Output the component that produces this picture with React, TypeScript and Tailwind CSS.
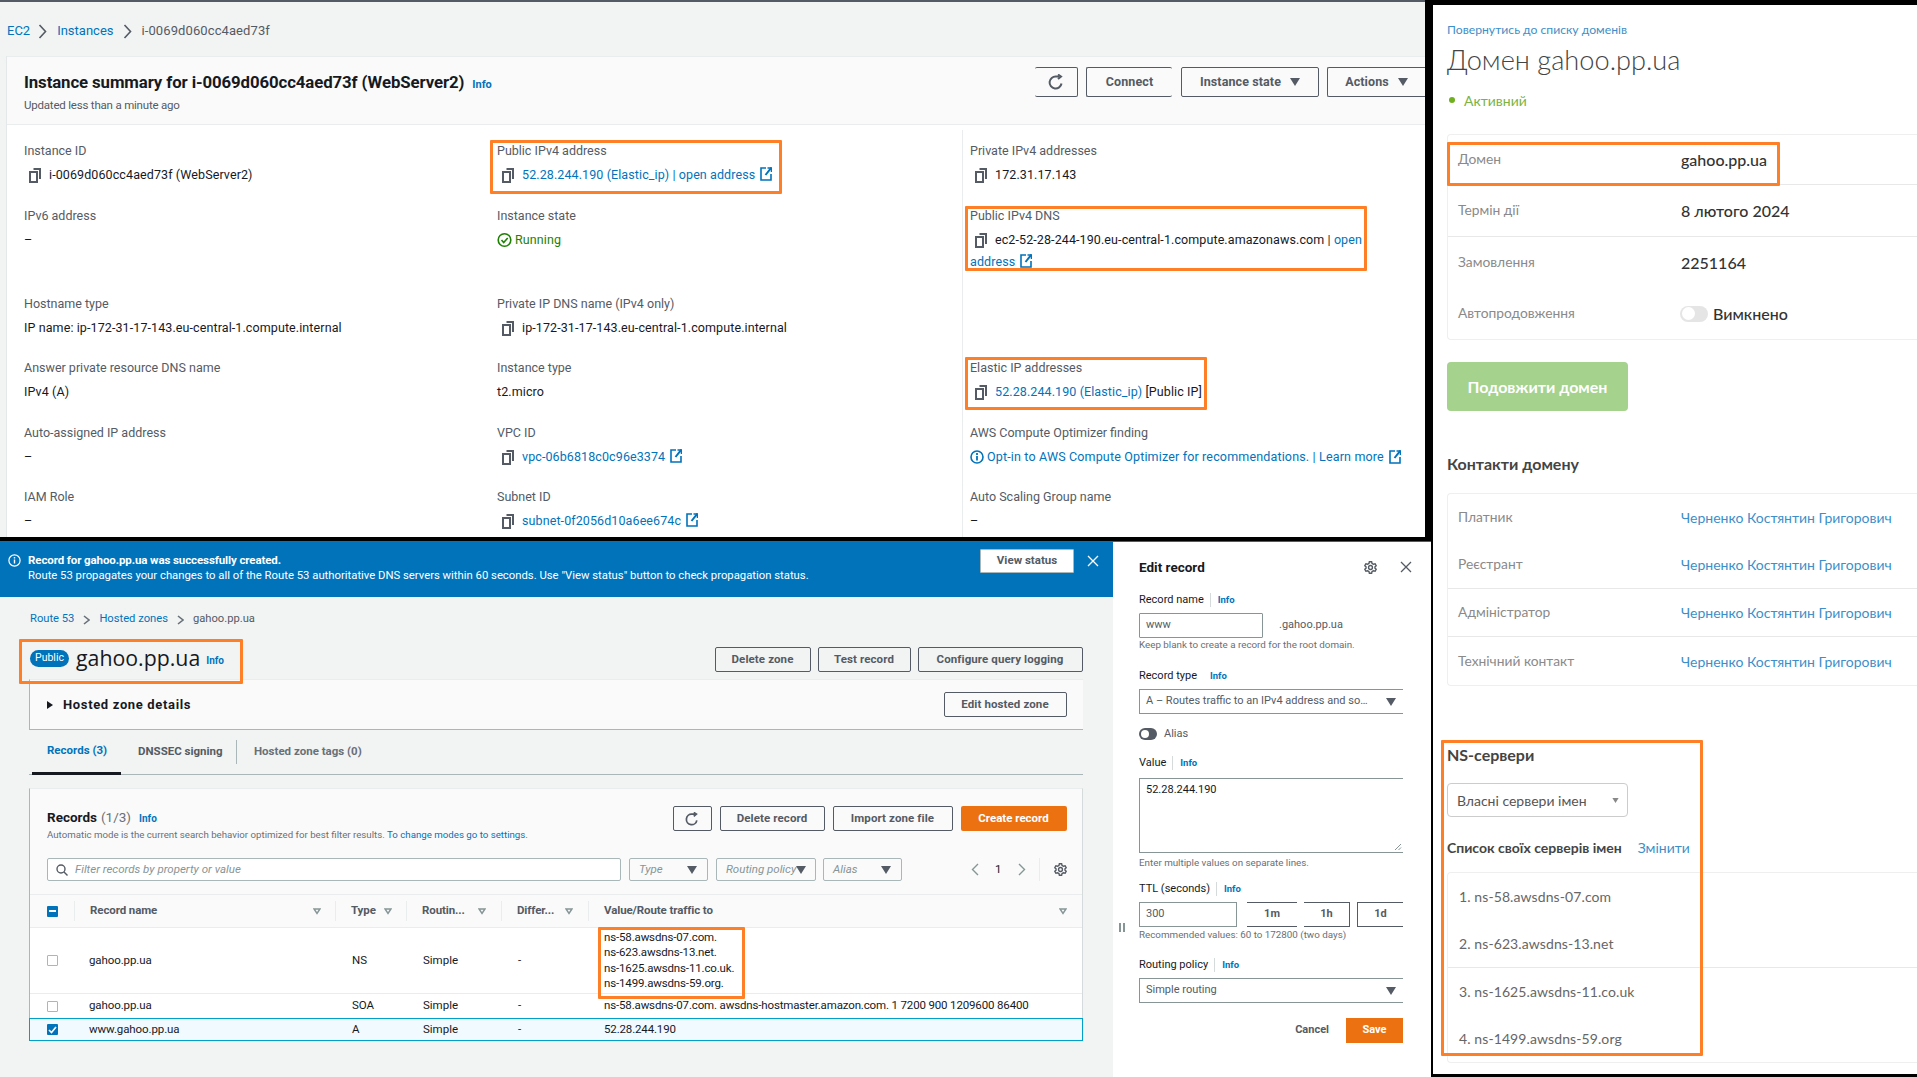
import React from "react";

const Copy = () => (
  <svg width="12" height="15" viewBox="0 0 12 15" fill="none" stroke="#545b64" strokeWidth="2" className="shrink-0">
    <rect x="1" y="4" width="7" height="10" />
    <path d="M4.5 1H11V11" />
  </svg>
);
const Ext = () => (
  <svg width="12" height="14" viewBox="0 0 12 14" fill="none" stroke="#0073bb" strokeWidth="1.6" className="shrink-0 inline-block ml-[5px] align-[-2px]">
    <path d="M6 1H1V13H11V7" />
    <path d="M11.5 0.5 5.5 8" strokeWidth="2" />
    <path d="M7.5 1H11.5V5" />
  </svg>
);
const Refresh = ({ s = 16 }: { s?: number }) => (
  <svg width={s} height={s} viewBox="0 0 16 16" fill="none" stroke="#545b64" strokeWidth="2">
    <path d="M13.5 9.5A6 6 0 1 1 8 2.5h3.5" />
    <path d="M10 0.5 13 2.5 10 5" />
  </svg>
);
const Caret = ({ c = "#545b64", w = 10, h = 8 }: { c?: string; w?: number; h?: number }) => (
  <svg width={w} height={h} viewBox="0 0 10 8" className="shrink-0">
    <path d="M0 0H10L5 8Z" fill={c} />
  </svg>
);
const FilterTri = () => (
  <svg width="8" height="7" viewBox="0 0 8 7" fill="none" stroke="#879596" strokeWidth="1.5" className="shrink-0">
    <path d="M1 1H7L4 5.5Z" />
  </svg>
);
const Gear = ({ s = 13 }: { s?: number }) => (
  <svg width={s} height={s} viewBox="0 0 16 16" fill="none" stroke="#545b64" strokeWidth="1.7">
    <circle cx="8" cy="8" r="2.4" />
    <path d="M6.6 1h2.8l.5 2 1.8 1 2-.6 1.3 2.4-1.5 1.4v1.6l1.5 1.4-1.3 2.4-2-.6-1.8 1-.5 2H6.6l-.5-2-1.8-1-2 .6L1 10.2l1.5-1.4V7.2L1 5.8l1.3-2.4 2 .6 1.8-1z" />
  </svg>
);
const Close = ({ c = "#545b64", s = 12 }: { c?: string; s?: number }) => (
  <svg width={s} height={s} viewBox="0 0 12 12" stroke={c} strokeWidth="1.3" fill="none">
    <path d="M1 1 11 11M11 1 1 11" />
  </svg>
);
const Chevron = () => (
  <svg width="9" height="15" viewBox="0 0 9 15" fill="none" stroke="#545b64" strokeWidth="1.6">
    <path d="M1.5 1 7.5 7.5 1.5 14" />
  </svg>
);
const SmallChevron = () => (
  <svg width="7" height="10" viewBox="0 0 7 10" fill="none" stroke="#687078" strokeWidth="1.6">
    <path d="M1 1 6 5 1 9" />
  </svg>
);

const Field = ({ label, h, children }: { label: string; h: string; children?: React.ReactNode }) => (
  <div className={h}>
    <div className="h-[20px] leading-[20px] text-[#545b64]">{label}</div>
    <div className="mt-[4px] min-h-[20px] leading-[20px] text-[#16191f] tracking-[0.1px]">{children}</div>
  </div>
);
const Copied = ({ children }: { children: React.ReactNode }) => (
  <div className="flex items-center gap-[8px] pl-[5px] whitespace-nowrap">
    <Copy />
    <span>{children}</span>
  </div>
);
const L = ({ children }: { children: React.ReactNode }) => <span className="text-[#0073bb]">{children}</span>;

const Btn = ({ cls, children }: { cls: string; children: React.ReactNode }) => (
  <div className={`flex items-center justify-center border border-[#545b64] rounded-[2px] font-bold text-[#545b64] whitespace-nowrap tracking-[0.1px] ${cls}`}>{children}</div>
);

const TopWindow = () => (
  <div className="w-[1425px] h-[537px] bg-[#f2f3f3] border-t-2 border-[#545b64] overflow-hidden text-[12.5px] font-[Roboto]">
    <div className="h-[54px] flex items-center pl-[7px] pt-[4px] text-[13px]">
      <span className="text-[#0073bb]">EC2</span>
      <span className="ml-[8px] mr-[10px]"><Chevron /></span>
      <span className="text-[#0073bb]">Instances</span>
      <span className="ml-[9px] mr-[10px]"><Chevron /></span>
      <span className="text-[#545b64] tracking-[0.1px]">i-0069d060cc4aed73f</span>
    </div>
    <div className="ml-[6px] bg-white border-l border-[#e5e8e8] h-[481px]">
      <div className="h-[69px] bg-[#fafafa] border-b border-t border-[#eaeded] flex justify-between pl-[17px]">
        <div className="pt-[14px]">
          <div className="flex items-baseline">
            <span className="text-[16.8px] font-bold text-[#16191f] leading-[22px] tracking-[-0.1px]">Instance summary for i-0069d060cc4aed73f (WebServer2)</span>
            <span className="ml-[8px] text-[11px] font-bold text-[#0073bb]">Info</span>
          </div>
          <div className="text-[11.5px] text-[#545b64] leading-[16px] mt-[3px] tracking-[-0.2px]">Updated less than a minute ago</div>
        </div>
        <div className="flex pt-[10px]">
          <Btn cls="w-[43px] h-[30px] border-l-0"><Refresh /></Btn>
          <Btn cls="ml-[8px] w-[86px] h-[30px] border-r-0">Connect</Btn>
          <Btn cls="ml-[9px] w-[138px] h-[30px] gap-[9px]">Instance state <Caret /></Btn>
          <Btn cls="ml-[8px] w-[98px] h-[30px] gap-[9px] border-r-0 rounded-r-none">Actions <Caret /></Btn>
        </div>
      </div>
      <div className="flex">
        <div className="w-[490px] pl-[17px] pt-[16px]">
          <Field label="Instance ID" h="h-[65px]"><Copied>i-0069d060cc4aed73f (WebServer2)</Copied></Field>
          <Field label="IPv6 address" h="h-[88px]">–</Field>
          <Field label="Hostname type" h="h-[64px]"><span className="whitespace-nowrap">IP name: ip-172-31-17-143.eu-central-1.compute.internal</span></Field>
          <Field label="Answer private resource DNS name" h="h-[65px]">IPv4 (A)</Field>
          <Field label="Auto-assigned IP address" h="h-[64px]">–</Field>
          <Field label="IAM Role" h="h-[64px]">–</Field>
        </div>
        <div className="w-[465px] pt-[16px]">
          <Field label="Public IPv4 address" h="h-[65px]">
            <Copied><L>52.28.244.190 (Elastic_ip) | open address</L><Ext /></Copied>
          </Field>
          <Field label="Instance state" h="h-[88px]">
            <div className="flex items-center gap-[3px] text-[#1d8102]">
              <svg width="15" height="16" viewBox="0 0 15 16" fill="none" stroke="#1d8102" strokeWidth="1.6"><circle cx="7.5" cy="8" r="6.3" /><path d="M4.5 8l2.2 2.5 4-4.5" /></svg>
              Running
            </div>
          </Field>
          <Field label="Private IP DNS name (IPv4 only)" h="h-[64px]"><Copied>ip-172-31-17-143.eu-central-1.compute.internal</Copied></Field>
          <Field label="Instance type" h="h-[65px]">t2.micro</Field>
          <Field label="VPC ID" h="h-[64px]"><Copied><L>vpc-06b6818c0c96e3374</L><Ext /></Copied></Field>
          <Field label="Subnet ID" h="h-[64px]"><Copied><L>subnet-0f2056d10a6ee674c</L><Ext /></Copied></Field>
        </div>
        <div className="mt-[5px] pt-[11px] pl-[7px] flex-1 border-l border-[#eaeded] h-[407px]">
          <Field label="Private IPv4 addresses" h="h-[65px]"><Copied>172.31.17.143</Copied></Field>
          <div className="h-[88px]">
            <div className="h-[20px] leading-[20px] text-[#545b64]">Public IPv4 DNS</div>
            <div className="mt-[3px] leading-[22px] text-[#16191f] tracking-[0.1px]">
              <div className="h-[22px] flex items-center gap-[8px] pl-[5px] whitespace-nowrap">
                <Copy />
                <span>ec2-52-28-244-190.eu-central-1.compute.amazonaws.com | <L>open</L></span>
              </div>
              <div className="h-[22px] whitespace-nowrap"><L>address</L><Ext /></div>
            </div>
          </div>
          <div className="h-[64px]" />
          <Field label="Elastic IP addresses" h="h-[65px]"><Copied><L>52.28.244.190 (Elastic_ip)</L> [Public IP]</Copied></Field>
          <Field label="AWS Compute Optimizer finding" h="h-[64px]">
            <div className="flex items-center whitespace-nowrap tracking-[0.16px]">
              <svg width="14" height="14" viewBox="0 0 14 14" fill="none" stroke="#0073bb" strokeWidth="1.6" className="mr-[3px]"><circle cx="7" cy="7" r="6" /><path d="M7 6v4.5M7 3v2" strokeWidth="1.8" /></svg>
              <L>Opt-in to AWS Compute Optimizer for recommendations. | Learn more</L><Ext />
            </div>
          </Field>
          <Field label="Auto Scaling Group name" h="h-[64px]">–</Field>
        </div>
      </div>
    </div>
  </div>
);

const Th = ({ children, pr }: { children?: React.ReactNode; pr: string }) => (
  <div className={`flex items-center h-[20px] border-l border-[#eaeded] pl-[15px] justify-between font-bold text-[#545b64] tracking-[-0.1px] ${pr}`}>
    <span className="whitespace-nowrap">{children}</span>
    <FilterTri />
  </div>
);

const Row = ({ h, sel, name, type, value, border, check }: { h: string; sel?: boolean; name: string; type: string; value: React.ReactNode; border: string; check: React.ReactNode }) => (
  <div className={`grid grid-cols-[44px_261px_71px_95px_87px_1fr] items-center text-[#16191f] ${h} ${border} ${sel ? "bg-[#f1faff]" : "bg-white"}`}>
    <div className="pl-[17px]">{check}</div>
    <div className="pl-[15px] tracking-[-0.1px]">{name}</div>
    <div className="pl-[17px]">{type}</div>
    <div className="pl-[17px]">Simple</div>
    <div className="pl-[17px]">-</div>
    <div className="pl-[16px] tracking-[-0.15px]">{value}</div>
  </div>
);

const Empty = () => <div className="w-[11px] h-[11px] border border-[#aab7b8] rounded-[1px] bg-white" />;

const FilterSel = ({ w, children }: { w: string; children: string }) => (
  <div className={`${w} h-[23px] border border-[#aab7b8] rounded-[2px] flex items-center justify-between pl-[9px] pr-[10px]`}>
    <span className="italic text-[#879596] whitespace-nowrap">{children}</span>
    <Caret />
  </div>
);

const MainArea = () => (
  <div className="w-[1113px] h-[535px] bg-[#f2f3f3]">
    <div className="h-[55px] bg-[#0073bb] text-white flex relative">
      <svg width="13" height="13" viewBox="0 0 13 13" fill="none" stroke="#fff" strokeWidth="1.2" className="ml-[8px] mt-[12px] shrink-0"><circle cx="6.5" cy="6.5" r="5.6" /><path d="M6.5 5.5v4M6.5 3v1.5" strokeWidth="1.4" /></svg>
      <div className="ml-[7px] pt-[10px] leading-[16px] whitespace-nowrap">
        <div className="font-bold tracking-[-0.1px]">Record for gahoo.pp.ua was successfully created.</div>
        <div className="text-[11.3px]">Route 53 propagates your changes to all of the Route 53 authoritative DNS servers within 60 seconds. Use "View status" button to check propagation status.</div>
      </div>
      <div className="absolute left-[980px] top-[7px] w-[94px] h-[24px] bg-white border border-[#aab7b8] rounded-[1px] flex items-center justify-center font-bold text-[#545b64]">View status</div>
      <div className="absolute left-[1087px] top-[13px]"><Close c="#fff" /></div>
    </div>
    <div className="pl-[29px] w-[1082.5px]">
      <div className="h-[43px] flex items-center gap-[9px] text-[11.2px] pt-[2px]">
        <span className="text-[#0073bb] ml-px">Route 53</span>
        <SmallChevron />
        <span className="text-[#0073bb]">Hosted zones</span>
        <SmallChevron />
        <span className="text-[#545b64]">gahoo.pp.ua</span>
      </div>
      <div className="h-[39px] flex justify-between items-start">
        <div className="flex items-center h-[38px] -mt-[1px]">
          <div className="w-[39px] h-[17px] rounded-full bg-[#0073bb] text-white text-[10.5px] flex items-center justify-center ml-[1px]">Public</div>
          <span className="ml-[7px] text-[21.3px] leading-[28px] text-[#16191f] font-[Open_Sans]">gahoo.pp.ua</span>
          <span className="ml-[6px] mt-[5px] text-[10px] font-bold text-[#0073bb]">Info</span>
        </div>
        <div className="flex gap-[7px] mt-[7px]">
          <Btn cls="w-[96px] h-[25px]">Delete zone</Btn>
          <Btn cls="w-[93px] h-[25px]">Test record</Btn>
          <Btn cls="w-[165px] h-[25px]">Configure query logging</Btn>
        </div>
      </div>
      <div className="h-[51px] bg-[#fafafa] border-t border-[#eaeded] border-l border-l-[#aab7b8] border-b border-b-[#aab7b8] flex items-center justify-between pl-[17px] pr-[16px]">
        <div className="flex items-center gap-[10px] font-bold text-[13px] tracking-[0.65px] text-[#16191f]">
          <svg width="6" height="8" viewBox="0 0 6 8"><path d="M0 0 6 4 0 8Z" fill="#16191f" /></svg>
          Hosted zone details
        </div>
        <Btn cls="w-[123px] h-[25px]">Edit hosted zone</Btn>
      </div>
      <div className="h-[45px] border-b border-[#aab7b8] flex font-bold text-[#545b64]">
        <div className="ml-[3px] w-[89px] pl-[15px] flex items-center border-b-[3px] border-[#16191f] text-[#0073bb] mb-[-1px]">Records (3)</div>
        <div className="pl-[17px] w-[115px] flex items-center">DNSSEC signing</div>
        <div className="my-[10px] border-l border-[#aab7b8] pl-[17px] flex items-center font-bold text-[#687078]">Hosted zone tags (0)</div>
      </div>
      <div className="mt-[13px] h-[253px] bg-[#fafafa] border-l border-r border-t border-[#eaeded] border-l-[#aab7b8] border-r-[#d5dbdb] border-b border-b-[#aab7b8] relative">
        <div className="flex justify-between pl-[17px] pr-[15px] pt-[17px] h-[69px]">
          <div>
            <div className="flex items-baseline pt-[1px]">
              <span className="text-[13.5px] leading-[18px] font-bold text-[#16191f]">Records</span>
              <span className="text-[13.5px] text-[#687078] ml-[4px]">(1/3)</span>
              <span className="ml-[8px] text-[10px] font-bold text-[#0073bb]">Info</span>
            </div>
            <div className="text-[9.7px] leading-[14px] mt-[1px] text-[#687078] whitespace-nowrap">
              Automatic mode is the current search behavior optimized for best filter results. <span className="text-[#0073bb]">To change modes go to settings.</span>
            </div>
          </div>
          <div className="flex gap-[8px]">
            <Btn cls="w-[39px] h-[25px]"><Refresh s={14} /></Btn>
            <Btn cls="w-[105px] h-[25px]">Delete record</Btn>
            <Btn cls="w-[120px] h-[25px]">Import zone file</Btn>
            <div className="w-[106px] h-[25px] bg-[#ec7211] rounded-[2px] flex items-center justify-center font-bold text-white">Create record</div>
          </div>
        </div>
        <div className="flex pl-[17px] h-[36px]">
          <div className="w-[574px] h-[23px] border border-[#aab7b8] rounded-[2px] bg-white flex items-center pl-[8px] gap-[7px]">
            <svg width="12" height="12" viewBox="0 0 12 12" fill="none" stroke="#545b64" strokeWidth="1.4"><circle cx="5" cy="5" r="4" /><path d="M8 8l3.5 3.5" /></svg>
            <span className="italic text-[#879596]">Filter records by property or value</span>
          </div>
          <div className="ml-[8px]"><FilterSel w="w-[79px]">Type</FilterSel></div>
          <div className="ml-[8px]"><FilterSel w="w-[100px]">Routing policy</FilterSel></div>
          <div className="ml-[7px]"><FilterSel w="w-[79px]">Alias</FilterSel></div>
          <div className="flex items-center h-[23px] ml-[69px]">
            <svg width="8" height="13" viewBox="0 0 8 13" fill="none" stroke="#879596" strokeWidth="1.4"><path d="M7 1 1.5 6.5 7 12" /></svg>
            <span className="ml-[16px] mr-[17px] text-[#16191f]">1</span>
            <svg width="8" height="13" viewBox="0 0 8 13" fill="none" stroke="#879596" strokeWidth="1.4"><path d="M1 1 6.5 6.5 1 12" /></svg>
            <div className="ml-[13px] h-[23px] border-l border-[#eaeded]" />
            <div className="ml-[14px]"><Gear /></div>
          </div>
        </div>
        <div className="h-[34px] border-t border-b border-[#eaeded] grid grid-cols-[44px_261px_71px_95px_87px_1fr] items-center">
          <div className="pl-[17px]">
            <div className="w-[11px] h-[11px] bg-[#0073bb] rounded-[1px] flex items-center justify-center"><div className="w-[7px] h-[2px] bg-white" /></div>
          </div>
          <Th pr="pr-[14px]">Record name</Th>
          <Th pr="pr-[14px]">Type</Th>
          <Th pr="pr-[15px]">Routin...</Th>
          <Th pr="pr-[15px]">Differ...</Th>
          <div className="flex items-center h-[20px] border-l border-[#eaeded] pl-[15px] pr-[15px] justify-between font-bold text-[#545b64] tracking-[-0.1px]">
            <span>Value/Route traffic to</span>
            <FilterTri />
          </div>
        </div>
        <Row h="h-[66px]" border="border-b border-[#eaeded]" name="gahoo.pp.ua" type="NS" check={<Empty />} value={
          <div className="leading-[15.4px]">
            <div>ns-58.awsdns-07.com.</div><div>ns-623.awsdns-13.net.</div><div>ns-1625.awsdns-11.co.uk.</div><div>ns-1499.awsdns-59.org.</div>
          </div>
        } />
        <Row h="h-[24px]" border="" name="gahoo.pp.ua" type="SOA" check={<Empty />} value={<span className="whitespace-nowrap">ns-58.awsdns-07.com. awsdns-hostmaster.amazon.com. 1 7200 900 1209600 86400</span>} />
        <Row h="h-[23px]" sel border="border border-[#00a1c9] -ml-px -mr-px" name="www.gahoo.pp.ua" type="A" check={
          <div className="w-[11px] h-[11px] bg-[#0073bb] rounded-[1px] flex items-center justify-center">
            <svg width="9" height="8" viewBox="0 0 9 8" fill="none" stroke="#fff" strokeWidth="1.6"><path d="M1 4l2.5 2.5L8 1" /></svg>
          </div>
        } value="52.28.244.190" />
      </div>
    </div>
  </div>
);

const LabelInfo = ({ label, cls, divider = true }: { label: string; cls: string; divider?: boolean }) => (
  <div className={`h-[16px] flex items-center text-[#16191f] ${cls}`}>
    <span>{label}</span>
    <span className={`ml-[6px] h-[14px] ${divider ? "border-l border-[#d5dbdb]" : ""}`} />
    <span className="ml-[7px] text-[9.5px] font-bold text-[#0073bb]">Info</span>
  </div>
);

const Drawer = () => (
  <div className="w-[318px] h-[535px] bg-white pl-[26px] relative text-[11px]">
    <div className="absolute left-[6px] top-[381px] flex gap-[2px]"><div className="w-[2px] h-[9px] bg-[#879596]" /><div className="w-[2px] h-[9px] bg-[#879596]" /></div>
    <div className="pt-[15px] h-[35px] flex items-center justify-between pr-[19px]">
      <span className="text-[13.5px] font-bold text-[#16191f]">Edit record</span>
      <div className="flex items-center gap-[23px]"><Gear /><Close /></div>
    </div>
    <LabelInfo label="Record name" cls="mt-[15px]" />
    <div className="mt-[5px] flex items-center">
      <div className="w-[124px] h-[25px] border border-[#879596] rounded-[1px] flex items-center pl-[6px] text-[#545b64]">www</div>
      <span className="ml-[16px] text-[#545b64]">.gahoo.pp.ua</span>
    </div>
    <div className="h-[14px] leading-[14px] text-[9.8px] text-[#687078]">Keep blank to create a record for the root domain.</div>
    <LabelInfo label="Record type" divider={false} cls="mt-[16px]" />
    <div className="mt-[5px] w-[264px] h-[25px] border border-[#879596] border-r-0 flex items-center justify-between pl-[6px] pr-[7px] text-[#545b64]">
      <span>A – Routes traffic to an IPv4 address and so…</span><Caret />
    </div>
    <div className="mt-[13px] h-[14px] flex items-center gap-[7px] text-[#545b64]">
      <div className="w-[18px] h-[12px] rounded-full bg-[#545b64] pl-[2px] flex items-center"><div className="w-[8px] h-[8px] rounded-full bg-white" /></div>
      Alias
    </div>
    <LabelInfo label="Value" cls="mt-[14px]" />
    <div className="mt-[7px] w-[264px] h-[75px] border border-[#879596] border-r-0 pl-[6px] pt-[3px] leading-[16px] text-[#16191f] relative">
      52.28.244.190
      <svg width="8" height="8" viewBox="0 0 8 8" className="absolute right-[1px] bottom-[1px]" stroke="#879596" fill="none"><path d="M1 7 7 1M4.5 7 7 4.5" /></svg>
    </div>
    <div className="mt-[3px] h-[14px] leading-[14px] text-[9.8px] text-[#687078]">Enter multiple values on separate lines.</div>
    <LabelInfo label="TTL (seconds)" cls="mt-[11px]" />
    <div className="mt-[5px] flex h-[25px] font-bold text-[#545b64]">
      <div className="w-[98px] border border-[#879596] pl-[6px] flex items-center font-normal">300</div>
      <div className="ml-[10px] w-[50px] border-t border-b border-[#545b64] flex items-center justify-center">1m</div>
      <div className="ml-[7px] w-[46px] border-t border-b border-r border-[#545b64] flex items-center justify-center">1h</div>
      <div className="ml-[7px] w-[46px] border-t border-b border-l border-[#545b64] flex items-center justify-center">1d</div>
    </div>
    <div className="h-[14px] mt-px leading-[14px] text-[9.8px] text-[#687078]">Recommended values: 60 to 172800 (two days)</div>
    <LabelInfo label="Routing policy" cls="mt-[15px]" />
    <div className="mt-[5px] w-[264px] h-[25px] border border-[#879596] border-r-0 flex items-center justify-between pl-[6px] pr-[7px] text-[#545b64]">
      <span>Simple routing</span><Caret />
    </div>
    <div className="mt-[15px] w-[264px] flex justify-end items-center gap-[17px]">
      <span className="font-bold text-[#545b64]">Cancel</span>
      <div className="w-[57px] h-[25px] bg-[#ec7211] flex items-center justify-center font-bold text-white">Save</div>
    </div>
  </div>
);

const DomainRow = ({ label, children, h, border = true }: { label: string; children: React.ReactNode; h: string; border?: boolean }) => (
  <div className={`flex items-center ${h} ${border ? "border-b border-[#e8e8e8]" : ""}`}>
    <span className="w-[233px] pl-[10px] text-[#8a8a8a] text-[13.8px]">{label}</span>
    {children}
  </div>
);
const Person = () => <span className="text-[#3d8fc9] text-[14px]">Черненко Костянтин Григорович</span>;
const NS = ({ children, h, border = false }: { children: string; h: string; border?: boolean }) => (
  <div className={`flex items-center pl-[11px] text-[#666] text-[14px] tracking-[0.1px] ${h} ${border ? "border-b border-[#e8e8e8]" : ""}`}>{children}</div>
);

const Domain = () => (
  <div className="ml-[2px] mt-[5px] w-[484px] h-[1069px] bg-white pl-[14px] pt-[15px] font-[Lato] text-[#333] overflow-hidden">
    <div className="h-[20px] leading-[20px] text-[12.2px] text-[#3d8fc9]">Повернутись до списку доменів</div>
    <div className="h-[40px] leading-[40px] text-[27.2px] font-light text-[#444]">Домен gahoo.pp.ua</div>
    <div className="mt-[10px] h-[20px] flex items-center text-[14px] text-[#7cb342]">
      <span className="ml-[2px] w-[6px] h-[6px] rounded-full bg-[#6fb01f] mr-[9px]" />
      Активний
    </div>
    <div className="mt-[24px] border-l border-t border-b border-[#efefef] rounded-l-[4px]">
      <DomainRow label="Домен" h="h-[50px]"><span className="text-[16px] font-medium text-[#333]">gahoo.pp.ua</span></DomainRow>
      <DomainRow label="Термін дії" h="h-[52px]"><span className="text-[16px] font-medium text-[#333]">8 лютого 2024</span></DomainRow>
      <DomainRow label="Замовлення" h="h-[51px]" border={false}><span className="text-[16px] font-medium text-[#333]">2251164</span></DomainRow>
      <DomainRow label="Автопродовження" h="h-[51px]" border={false}>
        <div className="w-[28px] h-[16px] rounded-full bg-[#e5e5e5] flex items-center -ml-px"><div className="w-[13px] h-[13px] ml-[2px] rounded-full bg-white" /></div>
        <span className="ml-[5px] text-[16px] font-medium">Вимкнено</span>
      </DomainRow>
    </div>
    <div className="mt-[22px] w-[181px] h-[49px] bg-[#a5d28d] rounded-[4px] flex items-center justify-center text-white font-bold text-[16px]">Подовжити домен</div>
    <div className="mt-[41px] h-[24px] leading-[24px] text-[16px] font-bold text-[#444]">Контакти домену</div>
    <div className="mt-[17px] border-l border-t border-b border-[#efefef] rounded-l-[4px]">
      <DomainRow label="Платник" h="h-[47px]" border={false}><Person /></DomainRow>
      <DomainRow label="Реєстрант" h="h-[48px]"><Person /></DomainRow>
      <DomainRow label="Адміністратор" h="h-[48px]"><Person /></DomainRow>
      <DomainRow label="Технічний контакт" h="h-[48px]" border={false}><Person /></DomainRow>
    </div>
    <div className="mt-[57px] h-[24px] leading-[24px] text-[16px] font-bold text-[#444]">NS-сервери</div>
    <div className="mt-[16px] w-[181px] h-[34px] border border-[#ccc] rounded-[4px] flex items-center justify-between pl-[9px] pr-[8px] text-[14px] text-[#555]">
      Власні сервери імен
      <Caret c="#888" w={7} h={5} />
    </div>
    <div className="mt-[20px] h-[20px] flex items-center text-[14px]">
      <span className="font-bold text-[#444]">Список своїх серверів імен</span>
      <span className="ml-[16px] text-[#3d8fc9]">Змінити</span>
    </div>
    <div className="mt-[15px] border-l border-t border-b border-[#efefef] rounded-l-[4px]">
      <NS h="h-[47px]">1. ns-58.awsdns-07.com</NS>
      <NS h="h-[48px]" border>2. ns-623.awsdns-13.net</NS>
      <NS h="h-[47px]">3. ns-1625.awsdns-11.co.uk</NS>
      <NS h="h-[47px]">4. ns-1499.awsdns-59.org</NS>
    </div>
  </div>
);

export default function App() {
  return (
    <div className="relative w-[1917px] h-[1077px] bg-black overflow-hidden flex">
      <div className="w-[1431px] shrink-0">
        <TopWindow />
        <div className="mt-[4px] h-[536px] border-t border-[#545b64] flex text-[11.5px] font-[Roboto]">
          <MainArea />
          <Drawer />
        </div>
      </div>
      <Domain />

      <div className="absolute left-[490px] top-[140px] w-[292px] h-[54px] border-[3px] border-[#ff7f27] rounded-[1px]" />
      <div className="absolute left-[965px] top-[206px] w-[402px] h-[65px] border-[3px] border-[#ff7f27] rounded-[1px]" />
      <div className="absolute left-[965px] top-[357px] w-[242px] h-[53px] border-[3px] border-[#ff7f27] rounded-[1px]" />
      <div className="absolute left-[1447px] top-[142px] w-[333px] h-[44px] border-[3px] border-[#ff7f27] rounded-[1px]" />
      <div className="absolute left-[1441px] top-[740px] w-[262px] h-[316px] border-[3px] border-[#ff7f27] rounded-[1px]" />
      <div className="absolute left-[19px] top-[639px] w-[224px] h-[45px] border-[3px] border-[#ff7f27] rounded-[1px]" />
      <div className="absolute left-[598px] top-[927px] w-[147px] h-[72px] border-[3px] border-[#ff7f27] rounded-[1px]" />
    </div>
  );
}
